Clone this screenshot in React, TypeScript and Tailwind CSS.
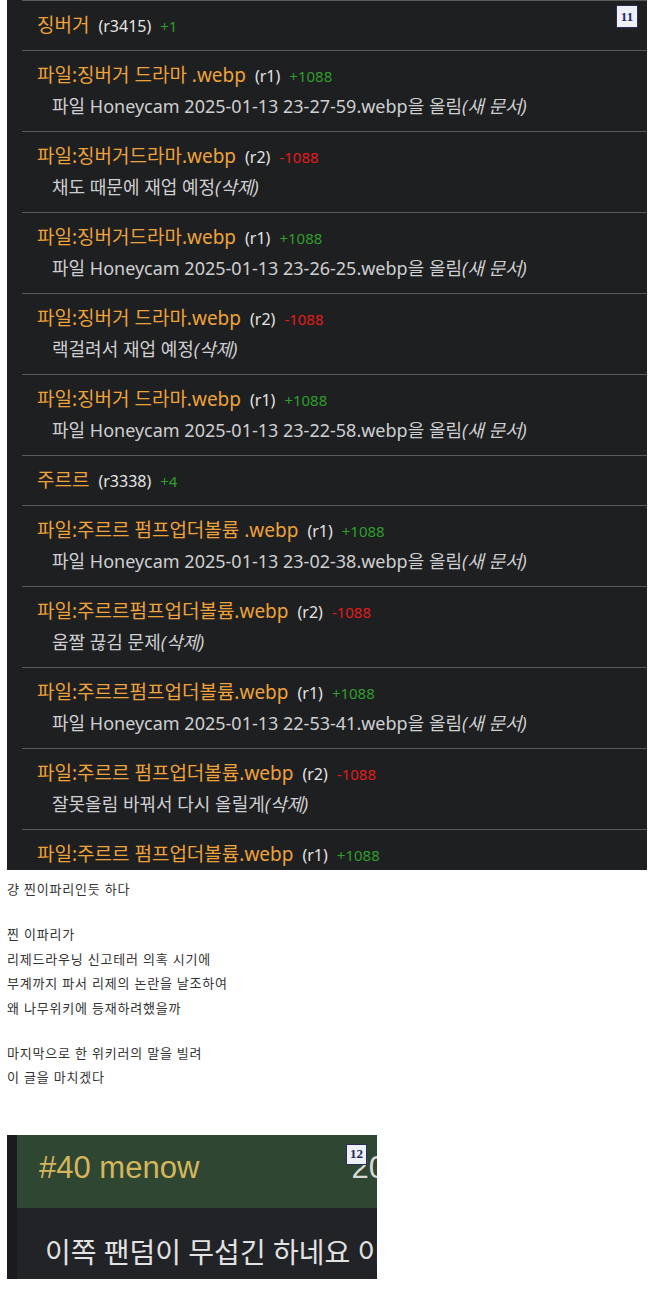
import React from "react";

type Row = {
  title: string;
  rev: string;
  diff: string;
  plus: boolean;
  sub?: string;
  tag?: string;
};

const rows: Row[] = [
  { title: "징버거", rev: "(r3415)", diff: "+1", plus: true },
  { title: "파일:징버거 드라마 .webp", rev: "(r1)", diff: "+1088", plus: true, sub: "파일 Honeycam 2025-01-13 23-27-59.webp을 올림", tag: "(새 문서)" },
  { title: "파일:징버거드라마.webp", rev: "(r2)", diff: "-1088", plus: false, sub: "채도 때문에 재업 예정", tag: "(삭제)" },
  { title: "파일:징버거드라마.webp", rev: "(r1)", diff: "+1088", plus: true, sub: "파일 Honeycam 2025-01-13 23-26-25.webp을 올림", tag: "(새 문서)" },
  { title: "파일:징버거 드라마.webp", rev: "(r2)", diff: "-1088", plus: false, sub: "랙걸려서 재업 예정", tag: "(삭제)" },
  { title: "파일:징버거 드라마.webp", rev: "(r1)", diff: "+1088", plus: true, sub: "파일 Honeycam 2025-01-13 23-22-58.webp을 올림", tag: "(새 문서)" },
  { title: "주르르", rev: "(r3338)", diff: "+4", plus: true },
  { title: "파일:주르르 펌프업더볼륨 .webp", rev: "(r1)", diff: "+1088", plus: true, sub: "파일 Honeycam 2025-01-13 23-02-38.webp을 올림", tag: "(새 문서)" },
  { title: "파일:주르르펌프업더볼륨.webp", rev: "(r2)", diff: "-1088", plus: false, sub: "움짤 끊김 문제", tag: "(삭제)" },
  { title: "파일:주르르펌프업더볼륨.webp", rev: "(r1)", diff: "+1088", plus: true, sub: "파일 Honeycam 2025-01-13 22-53-41.webp을 올림", tag: "(새 문서)" },
  { title: "파일:주르르 펌프업더볼륨.webp", rev: "(r2)", diff: "-1088", plus: false, sub: "잘못올림 바꿔서 다시 올릴게", tag: "(삭제)" },
  { title: "파일:주르르 펌프업더볼륨.webp", rev: "(r1)", diff: "+1088", plus: true },
];

const font = { fontFamily: '"Noto Sans", "Noto Sans CJK KR", sans-serif' };
const serif = { fontFamily: '"Liberation Serif", "DejaVu Serif", serif' };
const arial = { fontFamily: '"Liberation Sans", Arial, sans-serif' };

function HistoryRow({ r }: { r: Row }) {
  return (
    <div className={`border-t border-[#5a5a5c] pt-[12px] ${r.sub ? "h-[81px]" : "h-[50px]"}`}>
      <div className="flex items-baseline pl-[15px] h-[24px] leading-[24px] whitespace-nowrap">
        <span className="text-[19px] text-[#eda23b]">{r.title}</span>
        <span className="ml-[9px] text-[16px] text-[#e4e4e4]">{r.rev}</span>
        <span className={`ml-[9px] text-[15px] ${r.plus ? "text-[#2e9e2a]" : "text-[#e21c1c]"}`}>{r.diff}</span>
      </div>
      {r.sub && (
        <div className="pl-[30px] mt-[7px] h-[24px] leading-[24px] text-[18px] text-[#cfcfd1] whitespace-nowrap">
          {r.sub}
          <i className="italic">{r.tag}</i>
        </div>
      )}
    </div>
  );
}

export default function App() {
  return (
    <div className="w-[658px] min-h-[1291px] bg-white" style={font}>
      <div className="ml-[7px] w-[640px] h-[870px] overflow-hidden bg-[#1e1f21] relative">
        <div className="ml-[15px]">
          {rows.map((r, i) => (
            <HistoryRow key={i} r={r} />
          ))}
        </div>
        <div
          className="absolute left-[609px] top-[5px] w-[22px] h-[23px] bg-[#eef0f8] border border-[#2c2c5a] flex items-center justify-center text-[13px] font-bold text-[#26285e]"
          style={serif}
        >
          11
        </div>
      </div>

      <div className="pl-[7px] pt-[7px] text-[13px] tracking-[0.8px] text-[#333333]">
        <div className="h-[24px] leading-[24px]">걍 찐이파리인듯 하다</div>
        <div className="h-[21px]" />
        <div className="h-[24.5px] leading-[24.5px]">찐 이파리가</div>
        <div className="h-[24.5px] leading-[24.5px]">리제드라우닝 신고테러 의혹 시기에</div>
        <div className="h-[24.5px] leading-[24.5px]">부계까지 파서 리제의 논란을 날조하여</div>
        <div className="h-[24.5px] leading-[24.5px]">왜 나무위키에 등재하려했을까</div>
        <div className="h-[20.5px]" />
        <div className="h-[24.5px] leading-[24.5px]">마지막으로 한 위키러의 말을 빌려</div>
        <div className="h-[24.5px] leading-[24.5px]">이 글을 마치겠다</div>
      </div>

      <div className="ml-[7px] mt-[45px] w-[370px] h-[144px] overflow-hidden relative flex bg-[#1b1c1f]">
        <div className="w-[10px] shrink-0 bg-[#1a1b1e]" />
        <div className="flex-1 flex flex-col min-w-0">
          <div className="h-[73px] bg-[#2f4632] flex items-center justify-between pl-[22px] pb-[6px] whitespace-nowrap">
            <span className="text-[31px] text-[#d6b65c]" style={arial}>
              #40 menow
            </span>
            <span className="text-[31px] text-[#d8d8d8] -mr-[9px]" style={arial}>
              20
            </span>
          </div>
          <div className="flex-1 bg-[#222327] flex items-center pl-[28px] pt-[18px] whitespace-nowrap overflow-hidden">
            <span className="text-[28px] text-[#e2e2e2]">이쪽 팬덤이 무섭긴 하네요 이</span>
          </div>
        </div>
        <div
          className="absolute left-[339px] top-[9px] w-[21px] h-[21px] bg-[#eef0f8] border border-[#2c2c5a] flex items-center justify-center text-[13px] font-bold text-[#26285e]"
          style={serif}
        >
          12
        </div>
      </div>
    </div>
  );
}
